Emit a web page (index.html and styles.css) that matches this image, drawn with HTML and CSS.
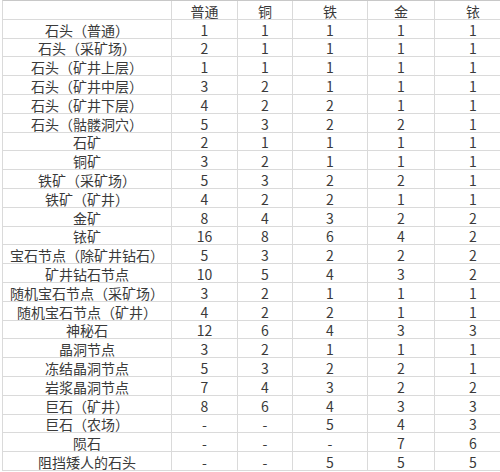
FILE: index.html
```html
<!DOCTYPE html>
<html lang="zh">
<head>
<meta charset="utf-8">
<link rel="stylesheet" href="styles.css">
</head>
<body>
<div class="sheet">
  <div class="row head"><div class="c"></div><div class="c">普通</div><div class="c">铜</div><div class="c">铁</div><div class="c">金</div><div class="c">铱</div></div>
  <div class="row"><div class="c">石头（普通）</div><div class="c">1</div><div class="c">1</div><div class="c">1</div><div class="c">1</div><div class="c">1</div></div>
  <div class="row"><div class="c">石头（采矿场）</div><div class="c">2</div><div class="c">1</div><div class="c">1</div><div class="c">1</div><div class="c">1</div></div>
  <div class="row"><div class="c">石头（矿井上层）</div><div class="c">1</div><div class="c">1</div><div class="c">1</div><div class="c">1</div><div class="c">1</div></div>
  <div class="row"><div class="c">石头（矿井中层）</div><div class="c">3</div><div class="c">2</div><div class="c">1</div><div class="c">1</div><div class="c">1</div></div>
  <div class="row"><div class="c">石头（矿井下层）</div><div class="c">4</div><div class="c">2</div><div class="c">2</div><div class="c">1</div><div class="c">1</div></div>
  <div class="row"><div class="c">石头（骷髅洞穴）</div><div class="c">5</div><div class="c">3</div><div class="c">2</div><div class="c">2</div><div class="c">1</div></div>
  <div class="row"><div class="c">石矿</div><div class="c">2</div><div class="c">1</div><div class="c">1</div><div class="c">1</div><div class="c">1</div></div>
  <div class="row"><div class="c">铜矿</div><div class="c">3</div><div class="c">2</div><div class="c">1</div><div class="c">1</div><div class="c">1</div></div>
  <div class="row"><div class="c">铁矿（采矿场）</div><div class="c">5</div><div class="c">3</div><div class="c">2</div><div class="c">2</div><div class="c">1</div></div>
  <div class="row"><div class="c">铁矿（矿井）</div><div class="c">4</div><div class="c">2</div><div class="c">2</div><div class="c">1</div><div class="c">1</div></div>
  <div class="row"><div class="c">金矿</div><div class="c">8</div><div class="c">4</div><div class="c">3</div><div class="c">2</div><div class="c">2</div></div>
  <div class="row"><div class="c">铱矿</div><div class="c">16</div><div class="c">8</div><div class="c">6</div><div class="c">4</div><div class="c">2</div></div>
  <div class="row"><div class="c">宝石节点（除矿井钻石）</div><div class="c">5</div><div class="c">3</div><div class="c">2</div><div class="c">2</div><div class="c">2</div></div>
  <div class="row"><div class="c">矿井钻石节点</div><div class="c">10</div><div class="c">5</div><div class="c">4</div><div class="c">3</div><div class="c">2</div></div>
  <div class="row"><div class="c">随机宝石节点（采矿场）</div><div class="c">3</div><div class="c">2</div><div class="c">1</div><div class="c">1</div><div class="c">1</div></div>
  <div class="row"><div class="c">随机宝石节点（矿井）</div><div class="c">4</div><div class="c">2</div><div class="c">2</div><div class="c">1</div><div class="c">1</div></div>
  <div class="row"><div class="c">神秘石</div><div class="c">12</div><div class="c">6</div><div class="c">4</div><div class="c">3</div><div class="c">3</div></div>
  <div class="row"><div class="c">晶洞节点</div><div class="c">3</div><div class="c">2</div><div class="c">1</div><div class="c">1</div><div class="c">1</div></div>
  <div class="row"><div class="c">冻结晶洞节点</div><div class="c">5</div><div class="c">3</div><div class="c">2</div><div class="c">2</div><div class="c">1</div></div>
  <div class="row"><div class="c">岩浆晶洞节点</div><div class="c">7</div><div class="c">4</div><div class="c">3</div><div class="c">2</div><div class="c">2</div></div>
  <div class="row"><div class="c">巨石（矿井）</div><div class="c">8</div><div class="c">6</div><div class="c">4</div><div class="c">3</div><div class="c">3</div></div>
  <div class="row"><div class="c">巨石（农场）</div><div class="c">-</div><div class="c">-</div><div class="c">5</div><div class="c">4</div><div class="c">3</div></div>
  <div class="row"><div class="c">陨石</div><div class="c">-</div><div class="c">-</div><div class="c">-</div><div class="c">7</div><div class="c">6</div></div>
  <div class="row"><div class="c">阻挡矮人的石头</div><div class="c">-</div><div class="c">-</div><div class="c">5</div><div class="c">5</div><div class="c">5</div></div>
</div>
</body>
</html>
```

FILE: styles.css
```css
html, body {
  margin: 0;
  padding: 0;
  background: #ffffff;
  overflow: hidden;
}
body {
  width: 500px;
  height: 472px;
}
.sheet {
  margin-left: 2px;
  width: 510px;
  border-top: 1px solid #c8c8c8;
  border-left: 1px solid #dadada;
  font-family: "Noto Sans CJK SC", "Noto Sans", sans-serif;
  font-size: 14px;
  color: #3a3a3a;
}
.row {
  display: grid;
  grid-template-columns: 169px 66px 55px 75px 67px 77px;
  height: 18.8px;
}
.c {
  box-sizing: border-box;
  border-right: 1px solid #dadada;
  border-bottom: 1px solid #dadada;
  display: flex;
  align-items: center;
  justify-content: center;
  white-space: nowrap;
  line-height: 1;
  padding-top: 2px;
  overflow: hidden;
}
```
